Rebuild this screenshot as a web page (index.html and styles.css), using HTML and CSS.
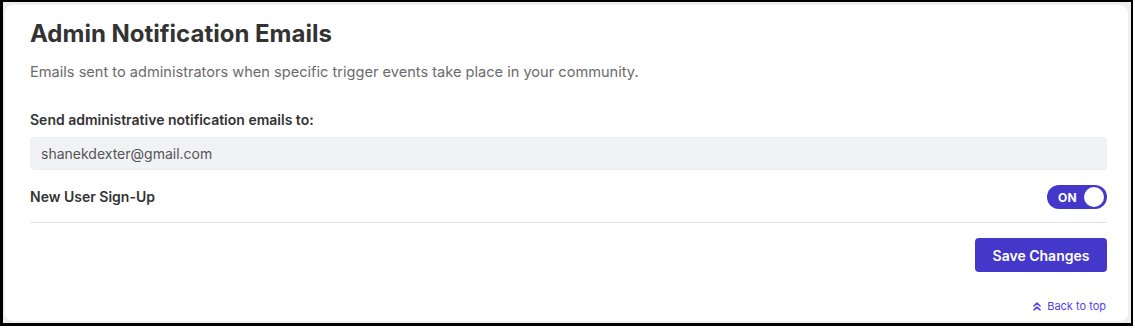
FILE: index.html
```html
<!DOCTYPE html>
<html lang="en">
<head>
<meta charset="utf-8">
<title>Admin Notification Emails</title>
<link rel="stylesheet" href="styles.css">
</head>
<body>
<div class="frame">
  <section class="card">
    <h1 class="title">Admin Notification Emails</h1>
    <p class="subtitle">Emails sent to administrators when specific trigger events take place in your community.</p>
    <label class="label" for="email">Send administrative notification emails to:</label>
    <div class="input" id="email">shanekdexter@gmail.com</div>
    <div class="row">
      <span class="row-label">New User Sign-Up</span>
      <span class="toggle"><span class="toggle-text">ON</span><span class="knob"></span></span>
    </div>
    <div class="actions">
      <button class="btn">Save Changes</button>
    </div>
    <div class="back">
      <a class="back-link" href="#">
        <svg class="back-icon" width="8" height="9" viewBox="0 0 8 9" fill="none" stroke="currentColor" stroke-width="1.6" stroke-linecap="round" stroke-linejoin="round"><path d="M1 4L4 1.2L7 4"/><path d="M1 7.8L4 5L7 7.8"/></svg>
        Back to top
      </a>
    </div>
  </section>
</div>
</body>
</html>
```

FILE: styles.css
```css
* { box-sizing: border-box; }
html, body { margin: 0; padding: 0; background: #fff; }
body { font-family: Inter, "Noto Sans", sans-serif; color: #333; }

.frame {
  width: 1133px;
  height: 326px;
  border: 2px solid #000;
  border-left-width: 3px;
  border-bottom-width: 3px;
  background: #efefef;
  padding: 3px 3px 2px 2px;
}

.card {
  height: 100%;
  background: #fff;
  border-radius: 8px;
  padding: 14px 21px 0 25px;
  display: flex;
  flex-direction: column;
}

.title {
  margin: 0;
  font-size: 24px;
  line-height: 30px;
  font-weight: 700;
  color: #333;
}

.subtitle {
  margin: 13px 0 0;
  font-size: 14.6px;
  line-height: 20px;
  color: #6b6b6b;
}

.label {
  margin-top: 28px;
  font-size: 14px;
  line-height: 20px;
  font-weight: 600;
  color: #333;
}

.input {
  margin-top: 7px;
  height: 33px;
  background: #f1f2f4;
  border: 1px solid #eceef1;
  border-radius: 4px;
  padding: 0 10px;
  display: flex;
  align-items: center;
  font-size: 14px;
  color: #555;
}

.row {
  margin-top: 15px;
  padding-bottom: 13px;
  border-bottom: 1px solid #e2e2e2;
  display: flex;
  align-items: center;
  justify-content: space-between;
}

.row-label {
  font-size: 14px;
  line-height: 20px;
  font-weight: 600;
  color: #333;
}

.toggle {
  width: 60px;
  height: 24px;
  border-radius: 12px;
  background: #4338ca;
  display: flex;
  align-items: center;
  justify-content: space-between;
  padding: 0 3px 0 11px;
}

.toggle-text {
  color: #fff;
  font-size: 12px;
  font-weight: 700;
  letter-spacing: 0.2px;
}

.knob {
  width: 20px;
  height: 20px;
  border-radius: 50%;
  background: #fff;
}

.actions {
  margin-top: 15px;
  display: flex;
  justify-content: flex-end;
}

.btn {
  width: 132px;
  height: 34px;
  border: none;
  border-radius: 4px;
  background: #4338ca;
  color: #fff;
  font-family: inherit;
  font-size: 14px;
  font-weight: 600;
  padding: 0;
}

.back {
  margin-top: 27px;
  display: flex;
  justify-content: flex-end;
  padding-right: 1px;
}

.back-link {
  display: flex;
  align-items: center;
  gap: 6px;
  color: #5046e5;
  text-decoration: none;
  font-size: 11px;
  line-height: 14px;
}

.back-icon { display: block; }
```
